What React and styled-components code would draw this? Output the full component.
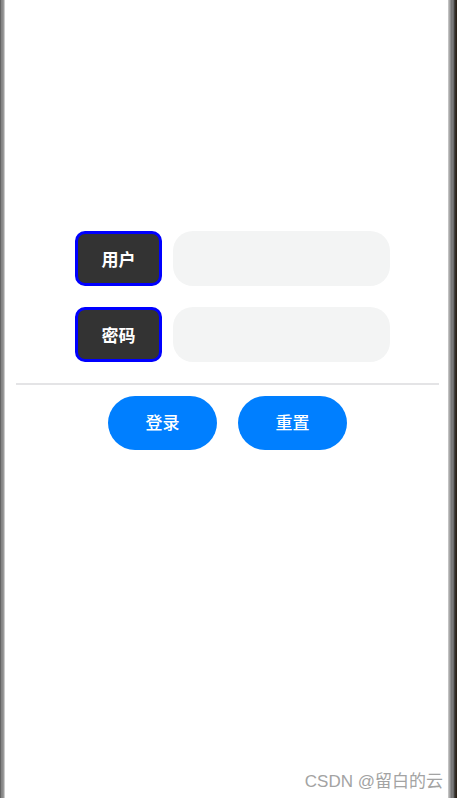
import React from "react"
import styled, { createGlobalStyle } from "styled-components"

const GlobalStyle = createGlobalStyle`
  html, body {
    margin: 0;
    padding: 0;
    background: #ffffff;
  }
  body {
    font-family: "Noto Sans CJK SC", "Noto Sans", sans-serif;
  }
`

const Device = styled.div`
  display: flex;
  flex-direction: row;
  width: 457px;
  height: 798px;
  overflow: hidden;
`

const Bezel = styled.div`
  flex: 0 0 ${p => p.$width}px;
  background: ${p => p.$bg};
`

const Screen = styled.div`
  flex: 1;
  display: flex;
  flex-direction: column;
  background: #ffffff;
  padding-top: 231px;
  position: relative;
`

const Form = styled.div`
  display: flex;
  flex-direction: column;
  gap: 21px;
  padding-left: 70px;
`

const Row = styled.div`
  display: flex;
  flex-direction: row;
  align-items: center;
  gap: 11px;
`

const Label = styled.div`
  box-sizing: border-box;
  width: 87px;
  height: 55px;
  display: flex;
  align-items: center;
  justify-content: center;
  padding-bottom: 1px;
  background: #333333;
  border: 3px solid #0000ff;
  border-radius: 10px;
  color: #ffffff;
  font-weight: 700;
  font-size: 17px;
`

const Input = styled.div`
  width: 217px;
  height: 55px;
  background: #f3f4f4;
  border-radius: 20px;
`

const Divider = styled.div`
  height: 2px;
  background: #e4e4e6;
  margin: 21px 9px 0 11px;
`

const Buttons = styled.div`
  display: flex;
  flex-direction: row;
  gap: 21px;
  padding-left: 103px;
  margin-top: 11px;
`

const Button = styled.div`
  box-sizing: border-box;
  width: 109px;
  height: 54px;
  display: flex;
  align-items: center;
  justify-content: center;
  padding-bottom: 3px;
  background: #007fff;
  border-radius: 27px;
  color: #ffffff;
  font-size: 17px;
  font-weight: 500;
`

const Watermark = styled.div`
  position: absolute;
  right: 5px;
  bottom: 6px;
  color: #a3a3a3;
  font-family: "Liberation Sans", "Noto Sans CJK SC", sans-serif;
  font-size: 17px;
`

export default function App() {
  return (
    <>
      <GlobalStyle />
      <Device>
        <Bezel $width={5} $bg="linear-gradient(to right, #5a5a5a 0, #6e6e6e 1px, #9a9a9a 2px, #7c7c7c 3px, #b8b8b8 4px, #e0e0e0 5px)" />
        <Screen>
          <Form>
            <Row>
              <Label>用户</Label>
              <Input />
            </Row>
            <Row>
              <Label>密码</Label>
              <Input />
            </Row>
          </Form>
          <Divider />
          <Buttons>
            <Button>登录</Button>
            <Button>重置</Button>
          </Buttons>
          <Watermark>CSDN @留白的云</Watermark>
        </Screen>
        <Bezel $width={9} $bg="linear-gradient(to right, #d0d0d0 0, #9a9a9a 2px, #6a6a6a 4px, #8a8a8a 5px, #4a4a4a 6px, #2a2218 8px)" />
      </Device>
    </>
  )
}
